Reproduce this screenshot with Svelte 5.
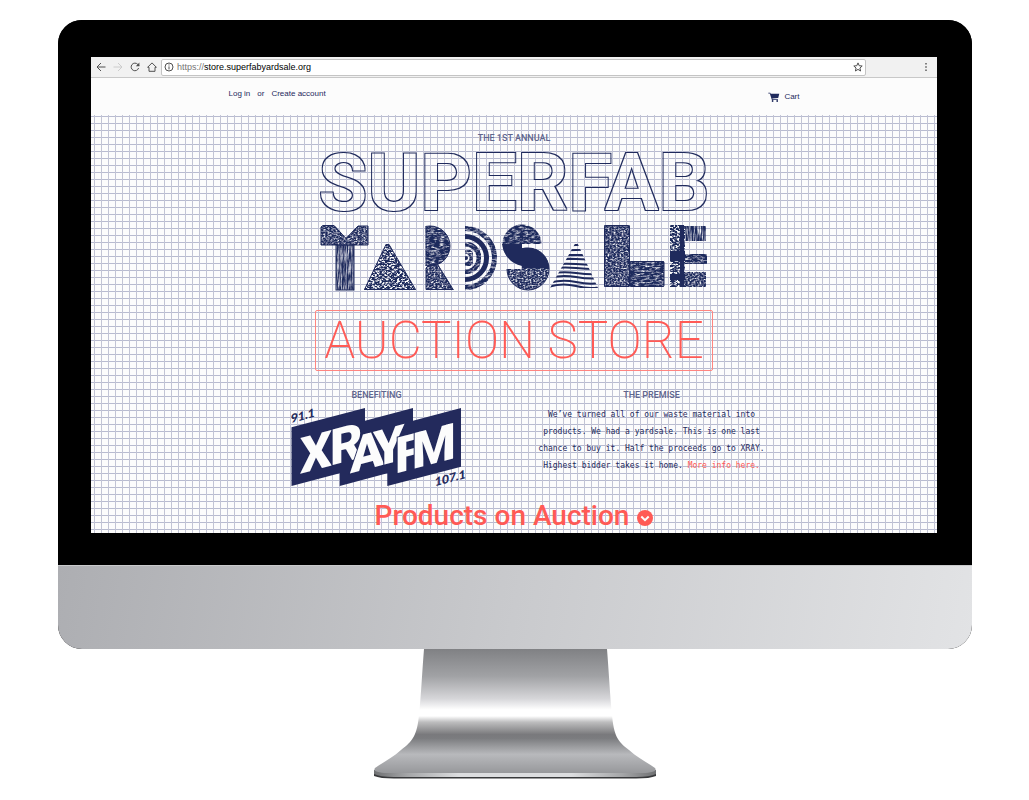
<script>
  let address = $state('store.superfabyardsale.org');
  const rings = [29.5, 21.5, 14, 7];
  const stripes = [20, 25, 30, 34, 39, 43, 48, 52, 57, 61];
</script>

<main class="stage">
  <div class="monitor">
    <div class="bezel">
      <div class="screen">
        <div class="toolbar">
          <button aria-label="Back">
            <svg viewBox="0 0 10 10"><path d="M9.5 5H1M5 1 1 5l4 4" /></svg>
          </button>
          <button class="dim" aria-label="Forward" disabled>
            <svg viewBox="0 0 10 10"><path d="M.5 5H9M5 1l4 4-4 4" /></svg>
          </button>
          <button aria-label="Reload">
            <svg viewBox="0 0 10 10"><path d="M8.6 6A3.8 3.8 0 1 1 7.8 2.4L9 3.6" /><path class="solid" d="M9.4.6v3.6H5.8z" /></svg>
          </button>
          <button aria-label="Home">
            <svg viewBox="0 0 10 10"><path d="M.6 5.3 5 .9l4.4 4.4H8v4H2v-4z" /></svg>
          </button>
          <div class="address">
            <svg viewBox="0 0 10 10"><circle cx="5" cy="5" r="4" /><path d="M5 4.4v3M5 2.4v1.1" /></svg>
            <label for="url">https://</label>
            <input id="url" type="text" bind:value={address} spellcheck="false" />
            <button aria-label="Bookmark">
              <svg viewBox="0 0 10 10"><path d="m5 .9 1.2 2.8 3 .3-2.3 2 .7 3L5 7.4 2.4 9l.7-3L.8 4l3-.3z" /></svg>
            </button>
          </div>
          <button class="more" aria-label="Menu">
            <svg viewBox="0 0 10 10"><path class="solid" d="M4.3 1h1.4v1.4H4.3zM4.3 4.3h1.4v1.4H4.3zM4.3 7.6h1.4V9H4.3z" /></svg>
          </button>
        </div>

        <header class="account">
          <nav>
            <a href="#login">Log in</a>
            <span>or</span>
            <a href="#register">Create account</a>
          </nav>
          <a class="cart" href="#cart">
            <svg viewBox="0 0 12 10" aria-hidden="true">
              <path d="M.3.8h1.9l.5 1H11.3L10.2 5.9 4.3 6.6l.3.7h5.4v.7H3.9L1.8 1.6H.3z" />
              <circle cx="4.6" cy="9" r=".9" /><circle cx="9.2" cy="9" r=".9" />
            </svg>
            Cart
          </a>
        </header>

        <section class="paper">
          <p class="eyebrow">The 1st Annual</p>
          <h1 class="outline">SUPERFAB</h1>

          <svg class="blocks" viewBox="0 0 388 68" role="img" aria-label="Yardsale">
            <defs>
              <filter id="contour" x="-2%" y="-10%" width="104%" height="120%" color-interpolation-filters="sRGB">
                <feMorphology in="SourceAlpha" operator="dilate" radius="1" result="wide" />
                <feFlood flood-color="#1f2a5c" />
                <feComposite in2="wide" operator="in" />
                <feComposite in2="SourceAlpha" operator="out" />
              </filter>
              <filter id="grain" x="-5%" y="-5%" width="110%" height="110%">
                <feTurbulence type="fractalNoise" baseFrequency=".5 .7" numOctaves="3" seed="4" />
                <feColorMatrix values="0 0 0 0 0  0 0 0 0 0  0 0 0 0 0  2.6 0 0 0 -1.05" result="n" />
                <feComposite in="SourceGraphic" in2="n" operator="out" />
              </filter>
              <filter id="wood" x="-5%" y="-5%" width="110%" height="110%">
                <feTurbulence type="fractalNoise" baseFrequency=".8 .08" numOctaves="3" seed="9" />
                <feColorMatrix values="0 0 0 0 0  0 0 0 0 0  0 0 0 0 0  2 0 0 0 -.7" result="n" />
                <feComposite in="SourceGraphic" in2="n" operator="out" />
              </filter>
              <filter id="rough" x="-5%" y="-5%" width="110%" height="110%">
                <feTurbulence type="fractalNoise" baseFrequency=".4 .6" numOctaves="3" seed="21" />
                <feColorMatrix values="0 0 0 0 0  0 0 0 0 0  0 0 0 0 0  5 0 0 0 -2.2" result="n" />
                <feComposite in="SourceGraphic" in2="n" operator="out" />
              </filter>
              <filter id="hatch" x="-5%" y="-5%" width="110%" height="110%">
                <feTurbulence type="fractalNoise" baseFrequency=".2 .6" numOctaves="3" seed="14" />
                <feColorMatrix values="0 0 0 0 0  0 0 0 0 0  0 0 0 0 0  2.6 0 0 0 -1.15" result="n" />
                <feComposite in="SourceGraphic" in2="n" operator="out" />
              </filter>
              <clipPath id="round-top"><rect x="105.5" y="0" width="30" height="43" /></clipPath>
              <clipPath id="half"><rect x="145" y="0" width="36" height="68" /></clipPath>
              <clipPath id="bowl-a"><path d="M180 0h42v20h-20v25h-22z" /></clipPath>
              <clipPath id="bowl-b"><path d="M202 20h30v48h-48V45h18z" /></clipPath>
              <clipPath id="cone"><path d="m256.5 17 21.5 47h-48z" /></clipPath>
            </defs>

            <g class="ink">
              <path filter="url(#grain)" d="M3 1h11l12 13L38 2h10v19H1V3z" />
              <path class="edge" d="M3 1.5h11l12 13L38 2h10v19H1V3z" />
              <rect filter="url(#wood)" x="16" y="21" width="18" height="45" />
              <rect class="edge" x="16" y="21" width="18" height="45" />

              <path filter="url(#rough)" d="M66 20h3l27 46H44z" />
              <path class="edge" d="M66 20.500h3l26.5 45h-51z" />

              <g clip-path="url(#round-top)">
                <circle filter="url(#hatch)" cx="110" cy="22" r="20" />
                <circle class="edge" cx="110" cy="22" r="20" />
                <path class="edge" d="M106 2v40" />
              </g>
              <path filter="url(#grain)" d="M109 41h9l16 25h-28V44z" />
              <path class="edge" d="M109 41h9l15 24.5h-27V44z" />

              <g clip-path="url(#half)">
                {#each rings as r, i}
                  <circle class="ring" filter={i === 1 ? undefined : 'url(#hatch)'} cx="145" cy="34" {r} />
                {/each}
                <circle cx="146" cy="34" r="2" />
              </g>

              <g clip-path="url(#bowl-a)">
                <circle filter="url(#hatch)" cx="202" cy="20" r="19.5" />
                <path d="M182 20h20v22q-17-4-20-22z" />
              </g>
              <g clip-path="url(#bowl-b)">
                <circle filter="url(#grain)" cx="208" cy="45" r="21" />
                <circle class="edge" cx="208" cy="45" r="21" />
                <path d="M202 24q24-2 27 20h-27z" />
              </g>

              <g clip-path="url(#cone)">
                {#each stripes as y, i}
                  <path class="stripe" d={`M228 ${y + 2}q14-${i / 2} 28-1t24 1`} />
                {/each}
              </g>

              <rect filter="url(#grain)" x="284" y="1" width="26" height="62" rx="1" />
              <rect class="edge" x="284.5" y="1.5" width="25" height="61" rx="1" />
              <rect filter="url(#hatch)" x="310" y="37" width="34" height="26" rx="1" />
              <rect class="edge" x="310" y="37.5" width="34" height="25" rx="1" />

              <rect filter="url(#rough)" x="350" y="1" width="15" height="62" />
              <rect x="350" y="27" width="15" height="10" />
              <rect x="350" y="50" width="15" height="6" />
              <rect x="360" y="1" width="4" height="62" />
              <rect filter="url(#wood)" x="365" y="2" width="21" height="15" />
              <rect filter="url(#hatch)" x="365" y="30" width="22" height="10" />
              <rect filter="url(#grain)" x="365" y="48" width="21" height="15" />
            </g>
          </svg>

          <p class="store">AUCTION STORE</p>

          <div class="columns">
            <div>
              <h2 class="eyebrow">Benefiting</h2>
              <svg class="xray" viewBox="0 0 171 81" role="img" aria-label="XRAY FM, 91.1 and 107.1">
                <path class="banner" d="M.5 20.3 74 1v12.7L122 1v12.7L170 1v58.7L96.3 79V66.3L48.700 79V66.3L.5 79z" />
                <g transform="skewY(-14.7)">
                  <text class="call" x="9" y="69">X</text>
                  <text class="call" x="39" y="69">R</text>
                  <text class="call" x="59" y="82">A</text>
                  <text class="call" x="82" y="82">Y</text>
                  <text class="call" x="104" y="94">F</text>
                  <text class="call" x="121" y="94">M</text>
                  <text class="freq" x="0" y="16">91.1</text>
                  <text class="freq" x="144" y="117">107.1</text>
                </g>
              </svg>
            </div>
            <div>
              <h2 class="eyebrow">The Premise</h2>
              <p class="premise">
                We’ve turned all of our waste material into products. We had a yardsale. This is one
                last chance to buy it. Half the proceeds go to XRAY. Highest bidder takes it home.
                <a href="#info">More info here.</a>
              </p>
            </div>
          </div>

          <h2 class="products">
            <a href="#products">
              Products on Auction
              <svg viewBox="0 0 16 16" aria-hidden="true"><circle cx="8" cy="8" r="8" /><path d="m4.3 6.5 3.7 3.7 3.7-3.7" /></svg>
            </a>
          </h2>
        </section>
      </div>
    </div>
    <div class="chin"></div>
  </div>

  <svg class="stand" viewBox="0 0 284 130" aria-hidden="true">
    <defs>
      <linearGradient id="metal" x1="0" y1="0" x2="0" y2="1">
        <stop offset="0" stop-color="#808184" />
        <stop offset=".22" stop-color="#a1a2a5" />
        <stop offset=".4" stop-color="#d6d6d9" />
        <stop offset=".49" stop-color="#fff" />
        <stop offset=".54" stop-color="#fff" />
        <stop offset=".59" stop-color="#bdbdbe" />
        <stop offset=".69" stop-color="#79797c" />
        <stop offset=".72" stop-color="#7b7c7f" />
        <stop offset=".85" stop-color="#b8b9bc" />
        <stop offset="1" stop-color="#97989b" />
      </linearGradient>
      <linearGradient id="lip">
        <stop offset="0" stop-color="#6f7072" />
        <stop offset=".12" stop-color="#a5a6a8" />
        <stop offset=".3" stop-color="#dcdddf" />
        <stop offset=".7" stop-color="#dcdddf" />
        <stop offset=".88" stop-color="#a5a6a8" />
        <stop offset="1" stop-color="#6f7072" />
      </linearGradient>
    </defs>
    <path d="M1 123v4q6 2.5 20 2.5h242q14 0 20-2.5v-4z" fill="#38393b" />
    <path d="M1 121v4q6 3 20 3h242q14 0 20-3v-4z" fill="url(#lip)" />
    <path fill="url(#metal)" d="M51 0h183c2 25 3 47 5 66 2 20 5 26 17 35 9 8 19 13 26 18 3 4-6 5-16 5H18c-10 0-19-1-16-5 7-5 17-10 26-18 12-9 16-15 18-35 2-18 3-41 5-66z" />
  </svg>
</main>

<style>
  :global(body) {
    margin: 0;
    background: #fff;
  }
  .stage {
    --ink: #1f2a5c;
    --coral: #ff5a55;
    box-sizing: border-box;
    min-height: 100vh;
    padding: 20px 57px 0 58px;
    font-family: 'Liberation Sans', Arial, sans-serif;
    color: var(--ink);
  }
  .monitor {
    border-radius: 24px;
    overflow: hidden;
    background: #000;
  }
  .bezel {
    padding: 37px 35px 32px 33px;
    background: #000;
  }
  .screen {
    overflow: hidden;
    background: #fcfcfc;
  }
  .chin {
    height: 84px;
    background: linear-gradient(100deg, #adaeb2, #c9cacd 50%, #e2e3e5);
    box-shadow: inset 0 1px #c9cacc;
  }
  .stand {
    display: block;
    width: 284px;
    margin: 0 auto;
  }

  button {
    display: flex;
    padding: 0;
    border: 0;
    background: none;
  }
  a {
    color: inherit;
    text-decoration: none;
  }
  .toolbar {
    display: flex;
    align-items: center;
    gap: 7px;
    height: 20px;
    padding: 0 6px 0 5px;
    border-bottom: 1px solid #c8c8c8;
    background: #f1f1f1;
  }
  .toolbar svg {
    width: 10px;
    height: 10px;
    fill: none;
    stroke: #505050;
    stroke-width: 1;
  }
  .toolbar .solid {
    fill: #505050;
    stroke: none;
  }
  .toolbar .dim svg {
    stroke: #ccc;
  }
  .address {
    display: flex;
    flex: 1;
    align-items: center;
    box-sizing: border-box;
    height: 17px;
    margin: 0 48px 0 -3px;
    padding: 0 2px;
    border: 1px solid #c4c4c4;
    border-radius: 2px;
    background: #fff;
    font-size: 9px;
  }
  .address label {
    margin-left: 3px;
    color: #777;
  }
  .address input {
    flex: 1;
    min-width: 0;
    padding: 0;
    border: 0;
    outline: 0;
    background: none;
    font: inherit;
    color: #000;
  }

  .account {
    display: flex;
    justify-content: space-between;
    max-width: 571px;
    height: 37px;
    margin: 0 auto;
    font-size: 8px;
    line-height: 12px;
  }
  .account nav {
    display: flex;
    gap: 7px;
    padding-top: 10px;
  }
  .cart {
    display: flex;
    align-items: center;
    gap: 4px;
    height: 12px;
    padding-top: 13px;
  }
  .cart svg {
    width: 12px;
    height: 10px;
    fill: var(--ink);
  }

  .paper {
    display: flex;
    flex-direction: column;
    align-items: center;
    padding-top: 17px;
    background:
      linear-gradient(90deg, #c2c4d5 1px, transparent 1px) 3px 0 / 7px 7px,
      linear-gradient(#b8bbd0 1px, transparent 1px) 0 1px / 7px 7px,
      #fcfcfc;
  }
  .eyebrow {
    margin: 0;
    font: 500 9px/12px Roboto, sans-serif;
    text-align: center;
    text-transform: uppercase;
    color: #5f658d;
  }
  .outline {
    margin: 9px 0 11px;
    font: 700 80px/60px Roboto, sans-serif;
    filter: url(#contour);
  }
  .blocks {
    width: 388px;
    height: 68px;
  }
  .ink {
    fill: var(--ink);
  }
  .ink .edge {
    fill: none;
    stroke: var(--ink);
    stroke-width: 1;
  }
  .ink .ring {
    fill: none;
    stroke: var(--ink);
    stroke-width: 5;
  }
  .ink .stripe {
    fill: none;
    stroke: var(--ink);
    stroke-width: 2;
  }
  .store {
    margin: 18px 0;
    padding: 0 8px;
    border: 1px solid #ff8580;
    border-radius: 2px;
    font: 200 51px/59px Roboto, sans-serif;
    color: var(--coral);
  }
  .columns {
    display: grid;
    grid-template-columns: 1fr 1fr;
    width: 100%;
    max-width: 550px;
    text-align: center;
  }
  .xray {
    display: block;
    width: 171px;
    height: 81px;
    margin: 6px auto 0;
    overflow: visible;
  }
  .banner {
    fill: #232a5c;
  }
  .call {
    font: 900 50px Roboto, sans-serif;
    fill: #fcfcfc;
    stroke: #232a5c;
    stroke-width: 2;
    paint-order: stroke;
  }
  .freq {
    font: 900 12px Lato, sans-serif;
    fill: #232a5c;
  }
  .premise {
    max-width: 232px;
    margin: 5px auto 0;
    font: 8px/17px 'DejaVu Sans Mono', monospace;
  }
  .premise a {
    color: var(--coral);
  }
  .products {
    margin: 11px 0 0;
    font: 500 28px/34px Roboto, sans-serif;
    color: var(--coral);
  }
  .products a {
    display: flex;
    align-items: center;
    gap: 8px;
  }
  .products svg {
    width: 16px;
    height: 16px;
    margin-top: 3px;
    fill: var(--coral);
  }
  .products path {
    fill: none;
    stroke: #fcfcfc;
    stroke-width: 2;
  }
</style>
